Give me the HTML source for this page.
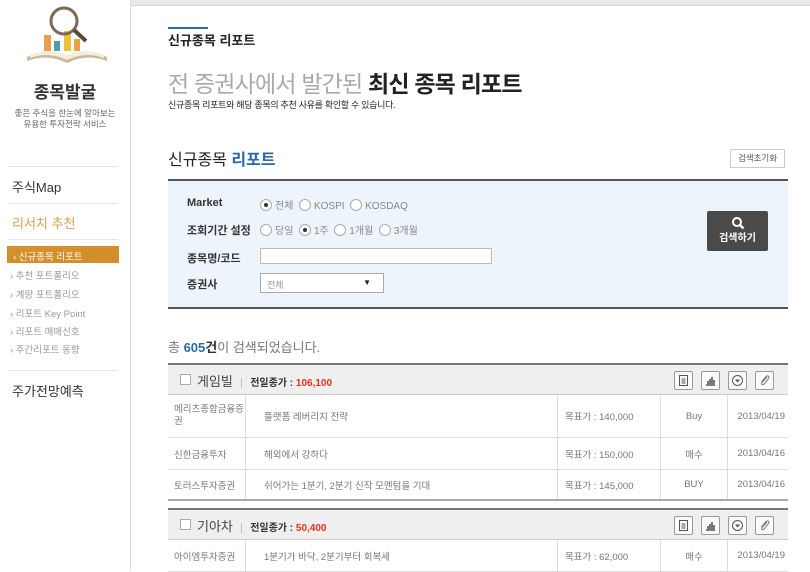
<!DOCTYPE html>
<html><head><meta charset="utf-8"><style>
*{margin:0;padding:0;box-sizing:border-box}
body{width:810px;height:570px;overflow:hidden;background:#fff;font-family:"Liberation Sans","Noto Sans CJK KR",sans-serif;color:#333;position:relative}
.abs{position:absolute}
.side{left:0;top:0;width:131px;height:570px;border-right:1px solid #ddd;background:#fff}
.topbar{left:131px;top:0;width:679px;height:6px;background:#e8e8e8;border-bottom:1px solid #d8d8d8}
.menu{font-size:13px;color:#333}
.sub{font-size:9.5px;color:#999;left:10px}
.radio{display:inline-block;width:12px;height:12px;border:1px solid #aaa;border-radius:50%;vertical-align:-2px;margin-right:3px;position:relative;background:#fff}
.radio.on:after{content:"";position:absolute;left:3px;top:3px;width:4px;height:4px;border-radius:50%;background:#333}
.lbl{font-size:11px;font-weight:bold;color:#333;left:187px}
.opt{font-size:10px;color:#888;left:260px}
.hd{left:168px;width:620px;height:32px;background:#efefef;border-top:2px solid #777;border-bottom:1px solid #ccc}
.row{left:168px;width:620px;border-bottom:1px solid #ddd;font-size:9.5px;color:#777}
.row div{position:absolute;top:0;height:100%;display:flex;align-items:center}
.ic{position:absolute;top:6px;width:19px;height:19px;border:1px solid #999;background:#fafafa;border-radius:2px}
.ic svg{position:absolute;left:2px;top:2px}
</style></head><body>
<div class="abs side"></div>
<div class="abs topbar"></div>
<svg class="abs" style="left:22px;top:5px" width="90" height="65" viewBox="0 0 90 65">
<path d="M5 52 Q25 44 45 52 Q65 44 85 52 L85 56 Q65 48 45 58 Q25 48 5 56Z" fill="#c9b89a"/>
<path d="M8 50 Q26 42 45 50 Q64 42 82 50 L82 53 Q64 46 45 55 Q26 46 8 53Z" fill="#f4ecdc"/>
<rect x="22" y="30" width="7" height="16" fill="#e8a14a"/><rect x="32" y="36" width="6" height="10" fill="#4aa0a8"/>
<rect x="42" y="26" width="7" height="20" fill="#f0c23a"/><rect x="52" y="34" width="6" height="12" fill="#e8a14a"/>
<circle cx="42" cy="16" r="13" fill="none" stroke="#7a6a55" stroke-width="3"/>
<line x1="52" y1="25" x2="64" y2="36" stroke="#5a4a3a" stroke-width="4"/>
</svg>
<div class="abs" style="left:0;width:130px;top:78px;text-align:center;font-size:17px;font-weight:bold;color:#333">종목발굴</div>
<div class="abs" style="left:0;width:130px;top:108px;text-align:center;font-size:8.5px;color:#666;line-height:11px">좋은 주식을 한눈에 알아보는<br>유용한 투자전략 서비스</div>
<div class="abs" style="left:8px;top:166px;width:110px;border-top:1px solid #e5e5e5"></div>
<div class="abs menu" style="left:12px;top:177px">주식Map</div>
<div class="abs" style="left:8px;top:203px;width:110px;border-top:1px solid #e5e5e5"></div>
<div class="abs menu" style="left:12px;top:213px;color:#d9a050">리서치 추천</div>
<div class="abs" style="left:8px;top:239px;width:110px;border-top:1px solid #e5e5e5"></div>
<div class="abs" style="left:7px;top:246px;width:112px;height:17px;background:#d38f2c;color:#fff;font-size:9.5px;padding:3px 0 0 6px">› 신규종목 리포트</div>
<div class="abs sub" style="top:268px">› 추천 포트폴리오</div>
<div class="abs sub" style="top:287px">› 계량 포트폴리오</div>
<div class="abs sub" style="top:306px">› 리포트 Key Point</div>
<div class="abs sub" style="top:324px">› 리포트 매매신호</div>
<div class="abs sub" style="top:342px">› 주간리포트 동향</div>
<div class="abs" style="left:8px;top:370px;width:110px;border-top:1px solid #e5e5e5"></div>
<div class="abs menu" style="left:12px;top:381px">주가전망예측</div>

<div class="abs" style="left:168px;top:27px;width:40px;border-top:2px solid #2a6aa8"></div>
<div class="abs" style="left:168px;top:30px;font-size:13px;font-weight:bold;color:#222">신규종목 리포트</div>
<div class="abs" style="left:168px;top:65px;font-size:23px;color:#aaa;white-space:nowrap;letter-spacing:-0.8px">전 증권사에서 발간된 <b style="color:#222">최신 종목 리포트</b></div>
<div class="abs" style="left:168px;top:98px;font-size:9px;color:#222;letter-spacing:-0.3px">신규종목 리포트와 해당 종목의 추천 사유를 확인할 수 있습니다.</div>
<div class="abs" style="left:168px;top:146px;font-size:16px;color:#222">신규종목 <span style="color:#2a6aa8;font-weight:bold">리포트</span></div>
<div class="abs" style="left:730px;top:149px;width:55px;height:19px;border:1px solid #ccc;font-size:8.5px;color:#555;text-align:center;line-height:17px">검색초기화</div>

<div class="abs" style="left:168px;top:179px;width:620px;height:130px;background:#eef4fb;border-top:2px solid #555;border-bottom:2px solid #555"></div>
<div class="abs lbl" style="top:197px">Market</div>
<div class="abs opt" style="top:197px"><span class="radio on"></span>전체 &nbsp;<span class="radio"></span>KOSPI &nbsp;<span class="radio"></span>KOSDAQ</div>
<div class="abs lbl" style="top:222px">조회기간 설정</div>
<div class="abs opt" style="top:222px"><span class="radio"></span>당일 &nbsp;<span class="radio on"></span>1주 &nbsp;<span class="radio"></span>1개월 &nbsp;<span class="radio"></span>3개월</div>
<div class="abs lbl" style="top:250px">종목명/코드</div>
<div class="abs" style="left:260px;top:248px;width:232px;height:16px;border:1px solid #bbb;background:#fff"></div>
<div class="abs lbl" style="top:276px">증권사</div>
<div class="abs" style="left:260px;top:273px;width:124px;height:20px;border:1px solid #aaa;background:#fff;font-size:9px;color:#999;padding:4px 0 0 6px">전체<span style="position:absolute;right:12px;top:4px;color:#222;font-size:8px">▼</span></div>
<div class="abs" style="left:707px;top:211px;width:61px;height:40px;background:#4a4a4a;border-radius:2px;color:#fff;text-align:center;font-size:10px;font-weight:bold">
<svg width="14" height="14" viewBox="0 0 14 14" style="margin-top:5px"><circle cx="6" cy="6" r="4" fill="none" stroke="#fff" stroke-width="2"/><line x1="9" y1="9" x2="12.5" y2="12.5" stroke="#fff" stroke-width="2.4"/></svg><br><span style="position:relative;top:-4px">검색하기</span></div>

<div class="abs" style="left:168px;top:337px;font-size:13px;color:#777">총 <b style="color:#2a6aa8">605</b><b style="color:#333">건</b>이 검색되었습니다.</div>

<div class="abs hd" style="top:363px">
<span class="abs" style="left:12px;top:9px;width:11px;height:11px;border:1px solid #aaa;background:#fff"></span>
<span class="abs" style="left:29px;top:6px;font-size:13px;color:#444">게임빌 &nbsp;<span style="color:#bbb;font-size:11px">|</span>&nbsp; <b style="font-size:10px;color:#333">전일종가 : <span style="color:#d32">106,100</span></b></span>
<span class="ic" style="left:506px"><svg width="13" height="13" viewBox="0 0 13 13"><rect x="2.5" y="1.5" width="8" height="10" fill="none" stroke="#555"/><line x1="4.5" y1="5" x2="8.5" y2="5" stroke="#555"/><line x1="4.5" y1="7" x2="8.5" y2="7" stroke="#555"/><line x1="4.5" y1="9" x2="8.5" y2="9" stroke="#555"/></svg></span>
<span class="ic" style="left:533px"><svg width="13" height="13" viewBox="0 0 13 13"><path d="M2 11H11M4 10V7M6 10V5M8 10V3M10 10V6" stroke="#333" stroke-width="1.3"/></svg></span>
<span class="ic" style="left:560px"><svg width="13" height="13" viewBox="0 0 13 13"><circle cx="6.5" cy="6.5" r="5" fill="none" stroke="#555"/><path d="M4 5.5L6.5 8.5L9 5.5Z" fill="#555"/></svg></span>
<span class="ic" style="left:587px"><svg width="13" height="13" viewBox="0 0 13 13"><path d="M9 3L4 8.5Q3 10 4.3 10.5Q5.5 11 6.5 9.5L10.5 4.5Q11.5 2.5 10 2Q8.5 1.5 7.5 3L3.5 8" fill="none" stroke="#777"/></svg></span>
</div>
<div class="abs row" style="top:395px;height:43px"><div style="left:6px;width:75px;line-height:12px">메리츠종합금융증권</div><div style="left:77px;border-left:1px solid #ddd;padding-left:18px;width:312px">플랫폼 레버리지 전략</div><div style="left:389px;border-left:1px solid #ddd;padding-left:7px;width:103px">목표가 : 140,000</div><div style="left:492px;border-left:1px solid #ddd;width:67px;justify-content:center">Buy</div><div style="left:559px;border-left:1px solid #ddd;width:61px;justify-content:flex-end;padding-right:3px">2013/04/19</div></div>
<div class="abs row" style="top:438px;height:32px"><div style="left:6px">신한금융투자</div><div style="left:77px;border-left:1px solid #ddd;padding-left:18px;width:312px">해외에서 강하다</div><div style="left:389px;border-left:1px solid #ddd;padding-left:7px;width:103px">목표가 : 150,000</div><div style="left:492px;border-left:1px solid #ddd;width:67px;justify-content:center">매수</div><div style="left:559px;border-left:1px solid #ddd;width:61px;justify-content:flex-end;padding-right:3px">2013/04/16</div></div>
<div class="abs row" style="top:470px;height:31px;border-bottom:2px solid #aaa"><div style="left:6px">토러스투자증권</div><div style="left:77px;border-left:1px solid #ddd;padding-left:18px;width:312px">쉬어가는 1분기, 2분기 신작 모멘텀을 기대</div><div style="left:389px;border-left:1px solid #ddd;padding-left:7px;width:103px">목표가 : 145,000</div><div style="left:492px;border-left:1px solid #ddd;width:67px;justify-content:center">BUY</div><div style="left:559px;border-left:1px solid #ddd;width:61px;justify-content:flex-end;padding-right:3px">2013/04/16</div></div>
<div class="abs hd" style="top:508px">
<span class="abs" style="left:12px;top:9px;width:11px;height:11px;border:1px solid #aaa;background:#fff"></span>
<span class="abs" style="left:29px;top:6px;font-size:13px;color:#444">기아차 &nbsp;<span style="color:#bbb;font-size:11px">|</span>&nbsp; <b style="font-size:10px;color:#333">전일종가 : <span style="color:#d32">50,400</span></b></span>
<span class="ic" style="left:506px"><svg width="13" height="13" viewBox="0 0 13 13"><rect x="2.5" y="1.5" width="8" height="10" fill="none" stroke="#555"/><line x1="4.5" y1="5" x2="8.5" y2="5" stroke="#555"/><line x1="4.5" y1="7" x2="8.5" y2="7" stroke="#555"/><line x1="4.5" y1="9" x2="8.5" y2="9" stroke="#555"/></svg></span>
<span class="ic" style="left:533px"><svg width="13" height="13" viewBox="0 0 13 13"><path d="M2 11H11M4 10V7M6 10V5M8 10V3M10 10V6" stroke="#333" stroke-width="1.3"/></svg></span>
<span class="ic" style="left:560px"><svg width="13" height="13" viewBox="0 0 13 13"><circle cx="6.5" cy="6.5" r="5" fill="none" stroke="#555"/><path d="M4 5.5L6.5 8.5L9 5.5Z" fill="#555"/></svg></span>
<span class="ic" style="left:587px"><svg width="13" height="13" viewBox="0 0 13 13"><path d="M9 3L4 8.5Q3 10 4.3 10.5Q5.5 11 6.5 9.5L10.5 4.5Q11.5 2.5 10 2Q8.5 1.5 7.5 3L3.5 8" fill="none" stroke="#777"/></svg></span>
</div>
<div class="abs row" style="top:540px;height:32px"><div style="left:6px">아이엠투자증권</div><div style="left:77px;border-left:1px solid #ddd;padding-left:18px;width:312px">1분기가 바닥, 2분기부터 회복세</div><div style="left:389px;border-left:1px solid #ddd;padding-left:7px;width:103px">목표가 : 62,000</div><div style="left:492px;border-left:1px solid #ddd;width:67px;justify-content:center">매수</div><div style="left:559px;border-left:1px solid #ddd;width:61px;justify-content:flex-end;padding-right:3px">2013/04/19</div></div>
</body></html>
